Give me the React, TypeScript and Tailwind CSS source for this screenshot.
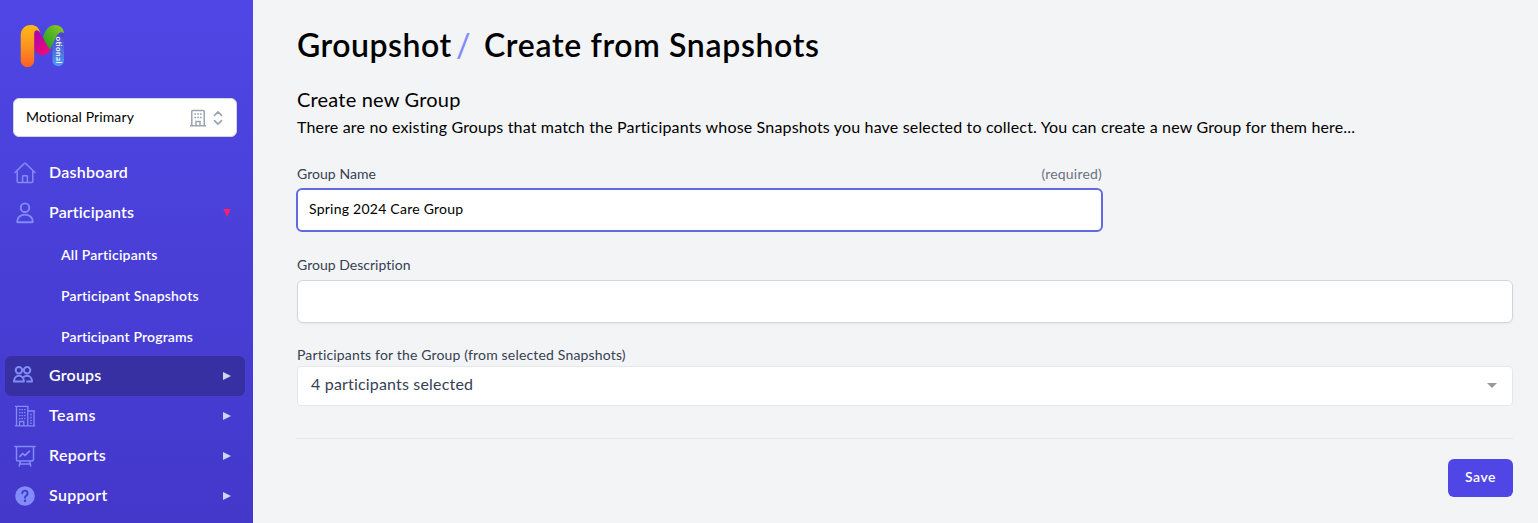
import { useState } from 'react'
import type { ReactNode } from 'react'

interface NavItem {
  label: string
  icon: ReactNode
  spacing: string
  arrow?: 'down' | 'right'
  active?: boolean
  children?: { label: string; spacing: string }[]
}

function HomeIcon() {
  return (
    <svg width="22" height="22" viewBox="0 0 22 22" fill="none" stroke="currentColor" strokeWidth="1.5" strokeLinecap="round" strokeLinejoin="round">
      <path d="M1 10.5 10.2 1.6a1.1 1.1 0 0 1 1.6 0L21 10.5" />
      <path d="M3.2 9v10.3a1.2 1.2 0 0 0 1.2 1.2h13.2a1.2 1.2 0 0 0 1.2-1.2V9M8.6 20.5v-6a.7.7 0 0 1 .7-.7h3.4a.7.7 0 0 1 .7.7v6" />
    </svg>
  )
}

function PersonIcon() {
  return (
    <svg width="22" height="22" viewBox="0 0 22 22" fill="none" stroke="currentColor" strokeWidth="1.9" strokeLinejoin="round">
      <circle cx="11" cy="5.7" r="4.3" />
      <path d="M3.8 20.2c-.4 0-.6-.2-.6-.6 0-4.100 3.500-7 7.800-7s7.800 2.900 7.800 7c0 .4-.2.6-.6.6z" />
    </svg>
  )
}

function GroupIcon() {
  return (
    <svg width="20" height="17" viewBox="0 0 20 17" fill="none" stroke="currentColor" strokeWidth="2" strokeLinejoin="round">
      <circle cx="5.9" cy="4.2" r="3.2" />
      <circle cx="14.1" cy="4.2" r="3.2" />
      <path d="M1 15.600c0-3.600 2.200-5.900 4.900-5.900s5 2.300 5 5.900z" />
      <path d="M10.300 11.200c1-1 2.300-1.500 3.800-1.500 2.700 0 4.900 2.300 4.900 5.900h-5.600" />
    </svg>
  )
}

function TeamsIcon() {
  return (
    <svg width="22" height="22" viewBox="0 0 22 22" fill="none" stroke="currentColor" strokeWidth="1.3">
      <path d="M.8 20.800h20.400M2.500 21V1.300h11.300V21M1 1.300h13.500M13.800 6h6.200v15M13.800 6h7.200M5.600 21v-4.500h4.200V21" />
      <path d="M5 4.600h1.500M7.500 4.600h1.500M10 4.600h1.500M5 7.600h1.500M7.500 7.600h1.500M10 7.600h1.500M5 10.600h1.500M7.500 10.600h1.500M10 10.600h1.500M5 13.600h1.500M7.500 13.600h1.500M10 13.600h1.500M16.200 9.500h1.500M16.200 12.500h1.500M16.200 15.500h1.500M16.200 18.300h1.500" strokeWidth="1.4" />
    </svg>
  )
}

function ReportsIcon() {
  return (
    <svg width="22" height="22" viewBox="0 0 22 22" fill="none" stroke="currentColor" strokeWidth="1.5" strokeLinecap="round" strokeLinejoin="round">
      <path d="M.8 1.500h20.400M2.500 1.500v13a1.500 1.500 0 0 0 1.500 1.500h14a1.500 1.500 0 0 0 1.500-1.500v-13M6.500 16l-1.300 5M15.500 16l1.300 5M5.800 18.900h10.400" />
      <path d="m5.800 11.300 3-2.800 2 2 4.700-4.300" strokeWidth="1.7" />
    </svg>
  )
}

function SupportIcon() {
  return (
    <svg width="22" height="22" viewBox="0 0 22 22">
      <circle cx="11" cy="11" r="9.8" fill="currentColor" />
      <path d="M8.200 8.300a2.700 2.700 0 1 1 4.300 2.200c-.9.700-1.500 1.100-1.500 2.300" fill="none" stroke="#4438cb" strokeWidth="1.9" strokeLinecap="round" />
      <circle cx="11" cy="15.800" r="1.2" fill="#4438cb" />
    </svg>
  )
}

function Logo() {
  return (
    <svg width="46" height="44" viewBox="0 0 46 44">
      <defs>
        <linearGradient id="orange" x1="0" y1="0" x2="0" y2="1">
          <stop offset="0" stopColor="#fdbb14" />
          <stop offset=".5" stopColor="#fb941f" />
          <stop offset="1" stopColor="#fb5f25" />
        </linearGradient>
        <linearGradient id="pink" x1="0" y1="0" x2=".6" y2="1">
          <stop offset="0" stopColor="#9b0bb0" />
          <stop offset=".5" stopColor="#c5069d" />
          <stop offset="1" stopColor="#ee0a79" />
        </linearGradient>
        <linearGradient id="green" x1="1" y1="0" x2="0" y2="1">
          <stop offset="0" stopColor="#92ca25" />
          <stop offset="1" stopColor="#159c25" />
        </linearGradient>
        <linearGradient id="blue" x1="0" y1="0" x2="0" y2="1">
          <stop offset="0" stopColor="#513bc8" />
          <stop offset="1" stopColor="#4b9cf3" />
        </linearGradient>
      </defs>
      <path d="M44 9v27.500a5.800 5.800 0 0 1-11.600 0V18z" fill="url(#blue)" />
      <path d="M13 5c4-1 6 2 7.500 5.500L31 24c-1.500 4-4.500 7-8.500 7-4 0-7-2.500-8.500-7z" fill="url(#pink)" />
      <path d="M23 13C25.500 6 28.500 1 35 1c5 0 8.700 3 9 8-4-2-6.500 1-8.500 5L30 25.500C27.500 22 24.500 18 23 13z" fill="url(#green)" />
      <path d="M.7 12C.7 5 4.700 1 10.700 1c5 0 8 2.300 9.500 7.500-3.500-4-6-2.500-6 1.500v26.500a6.700 6.700 0 0 1-13.500 0z" fill="url(#orange)" />
      <text transform="translate(35.800 12.500) rotate(90)" fill="#fff" fontSize="8" fontWeight="600" fontFamily="Lato, sans-serif" textLength="27">otional</text>
    </svg>
  )
}

const NAV: NavItem[] = [
  { label: 'Dashboard', icon: <HomeIcon />, spacing: 'tracking-[0.25px]' },
  {
    label: 'Participants',
    icon: <PersonIcon />,
    spacing: 'tracking-[0.12px]',
    arrow: 'down',
    children: [
      { label: 'All Participants', spacing: 'tracking-[0.22px]' },
      { label: 'Participant Snapshots', spacing: 'tracking-[0.18px]' },
      { label: 'Participant Programs', spacing: 'tracking-[0.15px]' },
    ],
  },
  { label: 'Groups', icon: <GroupIcon />, spacing: 'tracking-[0.2px]', arrow: 'right', active: true },
  { label: 'Teams', icon: <TeamsIcon />, spacing: 'tracking-[0.5px]', arrow: 'right' },
  { label: 'Reports', icon: <ReportsIcon />, spacing: 'tracking-[0.3px]', arrow: 'right' },
  { label: 'Support', icon: <SupportIcon />, spacing: 'tracking-[0.3px]', arrow: 'right' },
]

function Arrow({ dir }: { dir: 'down' | 'right' }) {
  return (
    <svg width="10" height="10" viewBox="0 0 10 10" className={dir === 'down' ? 'text-[#ff1d6c]' : 'text-[#cdd6ee]'}>
      <path d={dir === 'down' ? 'M1.300 1h7.400L5 9z' : 'M1 1v8l8-4z'} fill="currentColor" />
    </svg>
  )
}

function Sidebar() {
  return (
    <aside className="w-[253px] shrink-0 bg-linear-to-b from-[#4f46e5] to-[#4338ca] text-white">
      <div className="h-[98px] pt-6 pl-5">
        <Logo />
      </div>

      {/* Organisation switcher */}
      <button className="ml-[13px] flex h-[39px] w-56 items-center rounded-md border border-gray-300 bg-white pr-3 pl-3 text-left text-black">
        <span className="flex-1 pb-px text-sm tracking-[0.12px]">Motional Primary</span>
        <svg width="18" height="18" viewBox="0 0 18 18" fill="none" stroke="#9ca3af" strokeWidth="1.5" className="mr-[5px]">
          <path d="M1 16.800h16M2.800 16.800V2.500a1 1 0 0 1 1-1h10.400a1 1 0 0 1 1 1v14.300M7 16.800v-4.300h4v4.300" />
          <path d="M5.300 5h1.700M8.200 5h1.700M11 5h1.700M5.300 8.500h1.700M8.200 8.500h1.700M11 8.500h1.700" strokeWidth="1.6" />
        </svg>
        <svg width="12" height="16" viewBox="0 0 12 16" fill="none" stroke="#9ca3af" strokeWidth="1.7" strokeLinecap="round" strokeLinejoin="round">
          <path d="m2.500 5.300 3.500-3.400 3.500 3.400M2.500 10.700 6 14.100l3.500-3.400" />
        </svg>
      </button>

      <nav className="mt-4 pr-2 pl-[5px]">
        {NAV.map(item => (
          <div key={item.label}>
            <a className={`flex h-10 items-center rounded-md pr-[13px] ${item.active ? 'bg-[#3730a3]' : ''}`}>
              <span className={`w-11 text-[#818cf8] ${item.active ? 'pb-1 pl-2' : 'pl-[9px]'}`}>{item.icon}</span>
              <span className={`flex-1 pb-0.5 text-base font-semibold ${item.spacing}`}>{item.label}</span>
              {item.arrow && <Arrow dir={item.arrow} />}
            </a>
            {item.children?.map(c => (
              <a key={c.label} className={`flex h-[41px] items-center pt-0.5 pl-14 text-sm font-semibold ${c.spacing}`}>{c.label}</a>
            ))}
          </div>
        ))}
      </nav>
    </aside>
  )
}

export default function App() {
  const [name, setName] = useState('Spring 2024 Care Group')
  const [description, setDescription] = useState('')

  return (
    <div className="flex h-[523px] w-[1538px] overflow-hidden bg-gray-100 font-[Lato,sans-serif]">
      <Sidebar />
      <main className="flex-1 pr-[25px] pl-[43px]">
        <h1 className="flex pt-[25px] pl-px text-[32px] leading-10 font-semibold text-black">
          <span className="w-[159px] tracking-[0.5px]">Groupshot</span>
          <span className="w-7 font-medium text-[#818cf8]">/</span>
          <span className="tracking-[0.65px]">Create from Snapshots</span>
        </h1>

        <h2 className="mt-5 pl-px text-xl leading-7 tracking-[0.2px] text-black">Create new Group</h2>
        <p className="pl-px text-base leading-[27px] tracking-[0.166px] text-black">
          There are no existing Groups that match the Participants whose Snapshots you have selected to collect. You can create a new Group for them here...
        </p>

        <div className="mt-[22px] w-[807px]">
          <div className="flex justify-between pr-px pl-px text-sm leading-6">
            <label className="tracking-[0.05px] text-gray-700">Group Name</label>
            <span className="tracking-[0.2px] text-gray-500">(required)</span>
          </div>
          <input
            value={name}
            onChange={e => setName(e.target.value)}
            className="mt-0.5 block h-11 w-full rounded-md border-2 border-[#636ae0] bg-white px-[11px] pb-[3px] text-sm tracking-[0.24px] text-black outline-none"
          />
        </div>

        <div className="mt-[21px] pl-px">
          <label className="block h-[27px] text-sm leading-[23px] tracking-[0.02px] text-gray-700">Group Description</label>
          <input
            value={description}
            onChange={e => setDescription(e.target.value)}
            className="block h-[43px] w-full rounded-md border border-gray-300 bg-white px-3 text-sm shadow-xs outline-none"
          />
        </div>

        <div className="mt-[21px] pl-px">
          <label className="block text-sm leading-[22px] tracking-[0.17px] text-gray-700">Participants for the Group (from selected Snapshots)</label>
          <div className="flex h-10 items-center justify-between rounded-[4px] border border-gray-200 bg-white pr-[15px] pb-0.5 pl-[13px] text-base tracking-[0.18px] text-gray-700">
            <span className="pb-0.5">4 participants selected</span>
            <svg width="10" height="5" viewBox="0 0 10 5"><path d="M0 0h10L5 5z" fill="#999" /></svg>
          </div>
        </div>

        <div className="mt-8 flex justify-end border-t border-gray-200 pt-5">
          <button className="h-[38px] w-[65px] rounded-md bg-[#4f46e5] pb-0.5 text-sm font-semibold tracking-[0.5px] text-white">Save</button>
        </div>
      </main>
    </div>
  )
}
